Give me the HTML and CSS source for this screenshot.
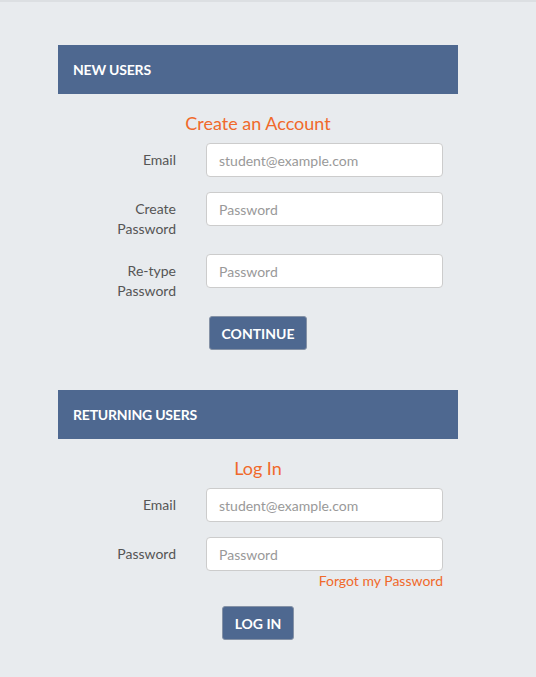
FILE: index.html
```html
<!DOCTYPE html>
<html lang="en">
<head>
    <meta charset="UTF-8">
    <meta name="viewport" content="width=device-width, initial-scale=1.0">
    <title>Sign In</title>
    <link rel="stylesheet" href="styles.css">
</head>
<body>
    <main class="page">
        <section class="panel">
            <h2 class="panel-heading">New Users</h2>
            <h3 class="panel-title">Create an Account</h3>
            <form class="form">
                <div class="form-row">
                    <label for="new-email">Email</label>
                    <div class="field"><input id="new-email" type="email" placeholder="student@example.com"></div>
                </div>
                <div class="form-row">
                    <label for="new-pass">Create Password</label>
                    <div class="field"><input id="new-pass" type="password" placeholder="Password"></div>
                </div>
                <div class="form-row">
                    <label for="new-pass2">Re-type Password</label>
                    <div class="field"><input id="new-pass2" type="password" placeholder="Password"></div>
                </div>
                <div class="actions">
                    <button type="submit" class="btn">Continue</button>
                </div>
            </form>
        </section>

        <section class="panel">
            <h2 class="panel-heading">Returning Users</h2>
            <h3 class="panel-title">Log In</h3>
            <form class="form">
                <div class="form-row">
                    <label for="login-email">Email</label>
                    <div class="field"><input id="login-email" type="email" placeholder="student@example.com"></div>
                </div>
                <div class="form-row">
                    <label for="login-pass">Password</label>
                    <div class="field">
                        <input id="login-pass" type="password" placeholder="Password">
                        <a href="#" class="forgot">Forgot my Password</a>
                    </div>
                </div>
                <div class="actions">
                    <button type="submit" class="btn">Log In</button>
                </div>
            </form>
        </section>
    </main>
</body>
</html>
```

FILE: styles.css
```css
html {
    border-top: 2px solid #dcdfe2;
}

body {
    font-family: Lato, "Open Sans", sans-serif;
    font-size: 14px;
    line-height: 20px;
    color: #555;
    margin: 0;
    background-color: #e8ebee;
}

.page {
    padding: 43px 0 0 58px;
}

.panel {
    width: 400px;
    margin-bottom: 40px;
}

.panel-heading {
    margin: 0;
    height: 49px;
    box-sizing: border-box;
    padding: 15px;
    background: #4e6890;
    color: #fff;
    font-size: 14px;
    font-weight: bold;
    line-height: 20px;
    letter-spacing: -0.2px;
    text-transform: uppercase;
}

.panel-title {
    margin: 19px 0 10px;
    text-align: center;
    font-size: 18px;
    font-weight: normal;
    line-height: 20px;
    color: #f0692b;
}

.form-row {
    display: grid;
    grid-template-columns: 133px 267px;
    margin-bottom: 15px;
}

.form-row label {
    padding: 7px 15px 0;
    text-align: right;
    color: #555;
}

.field {
    padding: 0 15px;
    display: flex;
    flex-direction: column;
}

.field input {
    height: 34px;
    box-sizing: border-box;
    padding: 6px 12px;
    border: 1px solid #ccc;
    border-radius: 4px;
    background: #fff;
    font-family: inherit;
    font-size: 14px;
    color: #555;
}

.field input::placeholder {
    color: #999;
}

.forgot {
    align-self: flex-end;
    color: #f0692b;
    text-decoration: none;
}

.actions {
    text-align: center;
}

.btn {
    height: 34px;
    padding: 6px 12px;
    border: 1px solid #8592a6;
    border-radius: 3px;
    background: #4e6890;
    color: #fff;
    font-family: inherit;
    font-size: 14px;
    font-weight: bold;
    text-transform: uppercase;
    cursor: pointer;
}
```
